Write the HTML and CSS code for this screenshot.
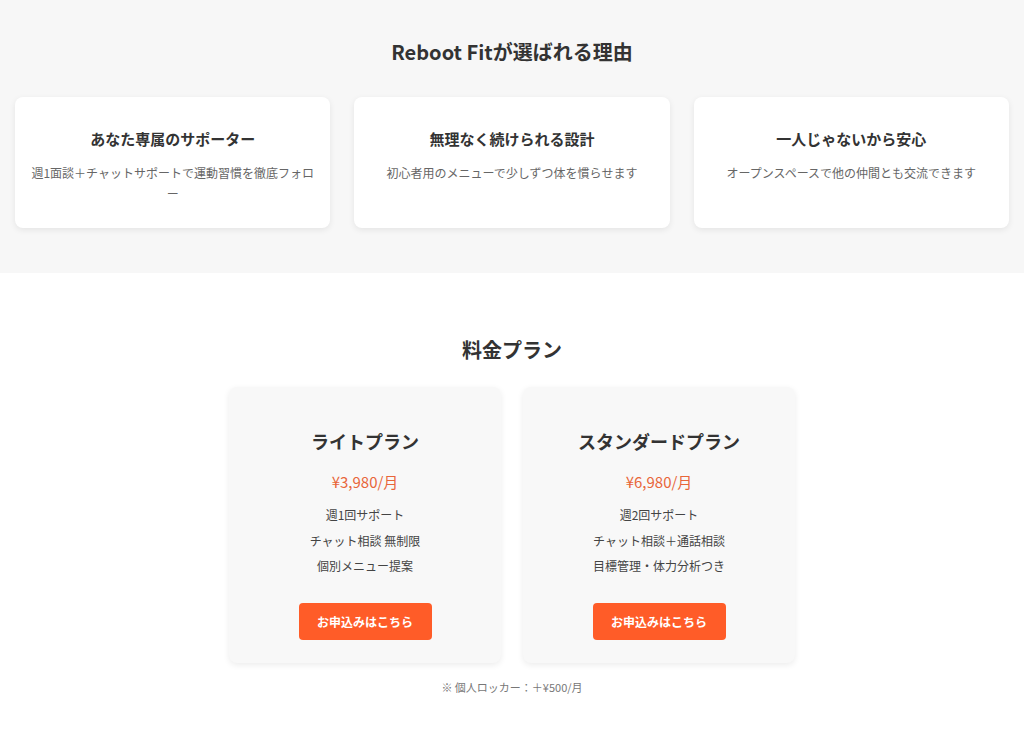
FILE: index.html
```html
<!DOCTYPE html>
<html lang="ja">
<head>
<meta charset="utf-8">
<title>Reboot Fit</title>
<link rel="stylesheet" href="styles.css">
</head>
<body>
<section class="reasons">
  <h2 class="section-title">Reboot Fitが選ばれる理由</h2>
  <div class="reason-grid">
    <div class="reason-card">
      <h3 class="reason-title">あなた専属のサポーター</h3>
      <p class="reason-text">週1面談＋チャットサポートで運動習慣を徹底フォロー</p>
    </div>
    <div class="reason-card">
      <h3 class="reason-title">無理なく続けられる設計</h3>
      <p class="reason-text">初心者用のメニューで少しずつ体を慣らせます</p>
    </div>
    <div class="reason-card">
      <h3 class="reason-title">一人じゃないから安心</h3>
      <p class="reason-text">オープンスペースで他の仲間とも交流できます</p>
    </div>
  </div>
</section>
<section class="pricing">
  <h2 class="section-title pricing-title">料金プラン</h2>
  <div class="plan-row">
    <div class="plan-card">
      <h3 class="plan-name">ライトプラン</h3>
      <p class="plan-price">¥3,980/月</p>
      <ul class="plan-features">
        <li>週1回サポート</li>
        <li>チャット相談 無制限</li>
        <li>個別メニュー提案</li>
      </ul>
      <a class="plan-button" href="#">お申込みはこちら</a>
    </div>
    <div class="plan-card">
      <h3 class="plan-name">スタンダードプラン</h3>
      <p class="plan-price">¥6,980/月</p>
      <ul class="plan-features">
        <li>週2回サポート</li>
        <li>チャット相談＋通話相談</li>
        <li>目標管理・体力分析つき</li>
      </ul>
      <a class="plan-button" href="#">お申込みはこちら</a>
    </div>
  </div>
  <p class="plan-note">※ 個人ロッカー：＋¥500/月</p>
</section>
</body>
</html>
```
FILE: styles.css
```css
* { box-sizing: border-box; }
body {
  margin: 0;
  font-family: "Noto Sans CJK JP", "Noto Sans", sans-serif;
  color: #333;
  background: #fff;
}
h2, h3, p, ul { margin: 0; padding: 0; }

.section-title {
  font-size: 20px;
  line-height: 30px;
  font-weight: 700;
  text-align: center;
  color: #333;
}

.reasons {
  background: #f7f7f7;
  padding: 37px 15px 45px;
}
.reason-grid {
  margin-top: 30px;
  display: grid;
  grid-template-columns: repeat(3, 1fr);
  gap: 24px;
}
.reason-card {
  background: #fff;
  border-radius: 8px;
  box-shadow: 0 2px 6px rgba(0,0,0,0.08);
  padding: 31px 15px 24px;
  text-align: center;
}
.reason-title {
  font-size: 15px;
  line-height: 22px;
  font-weight: 700;
  color: #333;
}
.reason-text {
  margin-top: 12px;
  font-size: 12px;
  line-height: 21px;
  color: #666;
}

.pricing {
  padding: 62px 15px 40px;
}
.plan-row {
  margin-top: 22px;
  display: flex;
  justify-content: center;
  gap: 22px;
}
.plan-card {
  width: 272px;
  background: #f8f8f8;
  border-radius: 8px;
  box-shadow: 0 2px 6px rgba(0,0,0,0.08);
  padding: 41px 20px 23px;
  text-align: center;
  display: flex;
  flex-direction: column;
  align-items: center;
}
.plan-name {
  font-size: 18px;
  line-height: 27px;
  font-weight: 700;
  color: #333;
}
.plan-price {
  margin-top: 16px;
  font-size: 15px;
  line-height: 22px;
  color: #e8663a;
}
.plan-features {
  list-style: none;
  margin-top: 9px;
  font-size: 12px;
  line-height: 25.5px;
  color: #444;
}
.plan-button {
  margin-top: 24px;
  display: block;
  width: 133px;
  height: 37px;
  line-height: 37px;
  background: #ff5c28;
  color: #fff;
  font-size: 12px;
  font-weight: 700;
  text-decoration: none;
  border-radius: 4px;
}
.plan-note {
  margin-top: 15px;
  text-align: center;
  font-size: 11px;
  line-height: 18px;
  color: #777;
}
```
